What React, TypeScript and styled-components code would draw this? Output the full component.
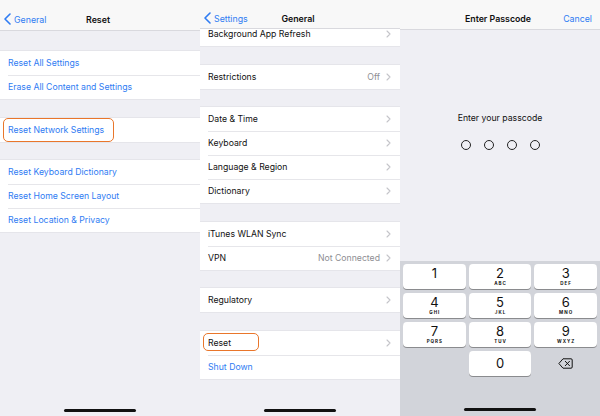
import React from "react";
import styled, { createGlobalStyle } from "styled-components";

const Global = createGlobalStyle`
  html, body { margin: 0; padding: 0; background: #efeff4; }
  body { font-family: Inter, "Liberation Sans", sans-serif; -webkit-font-smoothing: antialiased; }
`;

const BLUE = "#2f7cf3";

const Screen = styled.div`
  display: flex;
  width: 600px;
  height: 416px;
  overflow: hidden;
`;

const Panel = styled.div`
  position: relative;
  width: 200px;
  height: 416px;
  display: flex;
  flex-direction: column;
  background: #efeff4;
  overflow: hidden;
`;

const NavBar = styled.div<{ $h: number }>`
  flex: none;
  height: ${(p) => p.$h}px;
  box-sizing: border-box;
  display: grid;
  grid-template-columns: 1fr auto 1fr;
  align-items: center;
  padding: 8px 8px 0 4px;
  background: #f8f8f8;
  border-bottom: 1px solid #d9d9de;
  position: relative;
  z-index: 2;
`;

const NavTitle = styled.div`
  font-size: 8.8px;
  font-weight: 600;
  color: #111;
`;

const Back = styled.div`
  display: flex;
  align-items: center;
  gap: 3px;
  color: ${BLUE};
  font-size: 8.8px;
`;

const NavAction = styled.div`
  justify-self: end;
  color: ${BLUE};
  font-size: 8.8px;
`;

const Scroll = styled.div<{ $offset?: number }>`
  flex: 1;
  display: flex;
  flex-direction: column;
  gap: 18.5px;
  padding-top: 20px;
  margin-top: ${(p) => (p.$offset ? `${-p.$offset}px` : "0")};
`;

const Group = styled.div`
  background: #fff;
  box-shadow: 0 -0.5px 0 #dcdce0, 0 0.5px 0 #dcdce0;
`;

const Row = styled.div`
  position: relative;
  height: 24px;
  display: flex;
  align-items: center;
  padding: 0 9px 0 8px;
  font-size: 8.7px;
  color: #111;
  & + & {
    box-shadow: inset 8px 0 0 #fff, inset 0 1px 0 #e6e6ea;
  }
`;

const RowLabel = styled.span<{ $blue?: boolean }>`
  flex: 1;
  color: ${(p) => (p.$blue ? BLUE : "#111")};
`;

const RowValue = styled.span`
  color: #8e8e93;
  margin-right: 6px;
`;

const Highlight = styled.div<{ $w: number; $top: number; $h: number }>`
  position: absolute;
  left: 3px;
  top: ${(p) => p.$top}px;
  width: ${(p) => p.$w}px;
  height: ${(p) => p.$h}px;
  box-sizing: border-box;
  border: 1.2px solid #e9762b;
  border-radius: 5px;
  pointer-events: none;
`;

const HomeBar = styled.div<{ $bottom?: number }>`
  position: absolute;
  left: 64px;
  bottom: ${(p) => p.$bottom ?? 4}px;
  width: 72px;
  height: 3px;
  border-radius: 2px;
  background: #111;
  z-index: 3;
`;

const Chevron = () => (
  <svg width="5" height="8" viewBox="0 0 5 8">
    <path d="M1 1 L4 4 L1 7" fill="none" stroke="#c4c4c9" strokeWidth="1.1" strokeLinecap="round" strokeLinejoin="round" />
  </svg>
);

const BackChevron = () => (
  <svg width="7" height="12" viewBox="0 0 7 12">
    <path d="M6 1 L1 6 L6 11" fill="none" stroke={BLUE} strokeWidth="1.6" strokeLinecap="round" strokeLinejoin="round" />
  </svg>
);

type HL = { w: number; top: number; h: number };
type Item = { label: string; value?: string; chevron?: boolean; blue?: boolean; hl?: HL };

const SettingRow = ({ item }: { item: Item }) => (
  <Row>
    <RowLabel $blue={item.blue}>{item.label}</RowLabel>
    {item.value && <RowValue>{item.value}</RowValue>}
    {item.chevron && <Chevron />}
    {item.hl && <Highlight $w={item.hl.w} $top={item.hl.top} $h={item.hl.h} />}
  </Row>
);

const resetGroups: Item[][] = [
  [
    { label: "Reset All Settings", blue: true },
    { label: "Erase All Content and Settings", blue: true },
  ],
  [{ label: "Reset Network Settings", blue: true, hl: { w: 111, top: 0, h: 24 } }],
  [
    { label: "Reset Keyboard Dictionary", blue: true },
    { label: "Reset Home Screen Layout", blue: true },
    { label: "Reset Location & Privacy", blue: true },
  ],
];

const generalGroups: Item[][] = [
  [{ label: "Background App Refresh", chevron: true }],
  [{ label: "Restrictions", value: "Off", chevron: true }],
  [
    { label: "Date & Time", chevron: true },
    { label: "Keyboard", chevron: true },
    { label: "Language & Region", chevron: true },
    { label: "Dictionary", chevron: true },
  ],
  [
    { label: "iTunes WLAN Sync", chevron: true },
    { label: "VPN", value: "Not Connected", chevron: true },
  ],
  [{ label: "Regulatory", chevron: true }],
  [
    { label: "Reset", chevron: true, hl: { w: 56, top: 2, h: 18 } },
    { label: "Shut Down", blue: true },
  ],
];

/* Passcode */
const PassBody = styled.div`
  flex: 1;
  display: flex;
  flex-direction: column;
  align-items: center;
  padding-top: 83px;
`;

const Prompt = styled.div`
  font-size: 8.7px;
  color: #111;
`;

const Dots = styled.div`
  display: flex;
  gap: 13px;
  margin-top: 17px;
`;

const Dot = styled.div`
  width: 10px;
  height: 10px;
  box-sizing: border-box;
  border: 1.2px solid #222;
  border-radius: 50%;
`;

const Keypad = styled.div`
  flex: none;
  height: 155px;
  box-sizing: border-box;
  background: #d2d4da;
  display: grid;
  grid-template-columns: repeat(3, 1fr);
  grid-auto-rows: 25px;
  column-gap: 3px;
  row-gap: 4px;
  padding: 3px 3px 0 3px;
`;

const Key = styled.div<{ $blank?: boolean }>`
  background: ${(p) => (p.$blank ? "transparent" : "#fff")};
  border-radius: 4px;
  box-shadow: ${(p) => (p.$blank ? "none" : "0 1px 0 #8a8b8e")};
  display: flex;
  flex-direction: column;
  align-items: center;
  justify-content: center;
  color: #111;
`;

const Digit = styled.div`
  font-size: 13px;
  line-height: 13px;
  font-weight: 400;
`;

const Letters = styled.div`
  font-size: 4.5px;
  line-height: 6px;
  font-weight: 700;
  letter-spacing: 1px;
  margin-top: 1px;
  padding-left: 1px;
`;

const keys: [string, string][] = [
  ["1", "\u00a0"],
  ["2", "ABC"],
  ["3", "DEF"],
  ["4", "GHI"],
  ["5", "JKL"],
  ["6", "MNO"],
  ["7", "PQRS"],
  ["8", "TUV"],
  ["9", "WXYZ"],
];

const DeleteIcon = () => (
  <svg width="15" height="11" viewBox="0 0 15 11">
    <path d="M5 0.8 H13 a1.2 1.2 0 0 1 1.2 1.2 V9 a1.2 1.2 0 0 1 -1.2 1.2 H5 L0.9 5.5 Z" fill="none" stroke="#111" strokeWidth="1" strokeLinejoin="round" />
    <path d="M7.3 3.3 L11.5 7.7 M11.5 3.3 L7.3 7.7" stroke="#111" strokeWidth="1" strokeLinecap="round" />
  </svg>
);

export default function App() {
  return (
    <>
      <Global />
      <Screen>
        <Panel>
          <NavBar $h={31}>
            <Back>
              <BackChevron />
              <span>General</span>
            </Back>
            <NavTitle>Reset</NavTitle>
            <span />
          </NavBar>
          <Scroll>
            {resetGroups.map((g, i) => (
              <Group key={i}>
                {g.map((it) => (
                  <SettingRow key={it.label} item={it} />
                ))}
              </Group>
            ))}
          </Scroll>
          <HomeBar $bottom={4} />
        </Panel>

        <Panel>
          <NavBar $h={29}>
            <Back>
              <BackChevron />
              <span>Settings</span>
            </Back>
            <NavTitle>General</NavTitle>
            <span />
          </NavBar>
          <Scroll $offset={27}>
            {generalGroups.map((g, i) => (
              <Group key={i}>
                {g.map((it) => (
                  <SettingRow key={it.label} item={it} />
                ))}
              </Group>
            ))}
          </Scroll>
          <HomeBar $bottom={4} />
        </Panel>

        <Panel>
          <NavBar $h={30}>
            <span />
            <NavTitle>Enter Passcode</NavTitle>
            <NavAction>Cancel</NavAction>
          </NavBar>
          <PassBody>
            <Prompt>Enter your passcode</Prompt>
            <Dots>
              <Dot />
              <Dot />
              <Dot />
              <Dot />
            </Dots>
          </PassBody>
          <Keypad>
            {keys.map(([d, l]) => (
              <Key key={d}>
                <Digit>{d}</Digit>
                <Letters>{l}</Letters>
              </Key>
            ))}
            <Key $blank />
            <Key>
              <Digit>0</Digit>
            </Key>
            <Key $blank>
              <DeleteIcon />
            </Key>
          </Keypad>
          <HomeBar $bottom={5} />
        </Panel>
      </Screen>
    </>
  );
}
